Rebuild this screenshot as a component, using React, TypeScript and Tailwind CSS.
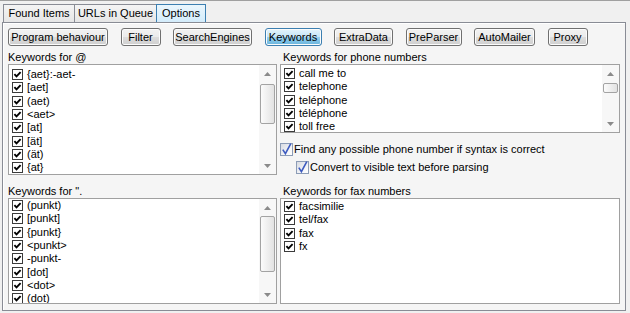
import React from "react";

const ListCheck = () => (
  <span className="flex h-[11px] w-[11px] shrink-0 items-center justify-center border border-[#3b3b3b] bg-white">
    <svg width="9" height="9" viewBox="0 0 9 9">
      <path d="M1.4 4.2 L3.5 6.3 L7.6 2.2" fill="none" stroke="#000" strokeWidth="1.9" />
    </svg>
  </span>
);

const XpCheck = () => (
  <span className="relative h-[13px] w-[13px] shrink-0 border border-[#8c9cb6] bg-[linear-gradient(135deg,#d8dbe2_0%,#f6f7f9_70%,#ffffff_100%)]">
    <svg width="13" height="13" viewBox="0 0 13 13" className="absolute -left-px -top-px overflow-visible">
      <path d="M2.8 6.6 L5.4 10.6 L10.8 0.6" fill="none" stroke="#3d5bc0" strokeWidth="1.6" />
    </svg>
  </span>
);

const Arrow = ({ up }: { up?: boolean }) => (
  <div className="flex h-[17px] items-center justify-center">
    <svg width="7" height="4" viewBox="0 0 7 4">
      <polygon points={up ? "0,4 3.5,0 7,4" : "0,0 3.5,4 7,0"} fill="#8a8a8a" />
    </svg>
  </div>
);

const ScrollBar = ({ thumbTop, thumbH }: { thumbTop: number; thumbH: number }) => (
  <div className="flex w-[17px] shrink-0 flex-col bg-[#f7f7f7]">
    <Arrow up />
    <div className="flex-1 px-[1px]">
      <div
        className="rounded-[2px] border border-[#a3a3a3] bg-linear-to-r from-[#fbfbfb] to-[#e2e2e2]"
        style={{ marginTop: thumbTop, height: thumbH }}
      />
    </div>
    <Arrow />
  </div>
);

const KeywordList = ({
  items,
  pad,
  className,
  scroll,
}: {
  items: string[];
  pad: string;
  className: string;
  scroll?: { top: number; h: number };
}) => (
  <div className={`flex overflow-hidden border border-[#a0a0a0] bg-white ${className}`}>
    <div className={`min-w-0 flex-1 overflow-hidden pl-[3px] ${pad}`}>
      {items.map((it, i) => (
        <div key={i} className="flex h-[13.33px] items-center gap-[4px] whitespace-nowrap">
          <ListCheck />
          <span className="leading-[13px]">{it}</span>
        </div>
      ))}
    </div>
    {scroll && <ScrollBar thumbTop={scroll.top} thumbH={scroll.h} />}
  </div>
);

const tabs = [
  { label: "Found Items", w: "w-[72px]" },
  { label: "URLs in Queue", w: "w-[83px]" },
  { label: "Options", w: "w-[50px]", active: true },
];

const buttons = [
  { label: "Program behaviour", w: "w-[100px]" },
  { label: "Filter", w: "w-[40px]" },
  { label: "SearchEngines", w: "w-[79px]" },
  { label: "Keywords", w: "w-[57px]", active: true },
  { label: "ExtraData", w: "w-[59px]" },
  { label: "PreParser", w: "w-[56px]" },
  { label: "AutoMailer", w: "w-[61px]" },
  { label: "Proxy", w: "w-[40px]" },
];

export default function App() {
  return (
    <div className="h-[313px] w-[630px] overflow-hidden border-t border-[#a0a0a0] bg-[#f0f0f0] font-['Liberation_Sans',Arial,sans-serif] text-[11px] text-black">
      {/* tab strip */}
      <div className="flex pl-[3px] pt-[3px]">
        {tabs.map((t) => (
          <div
            key={t.label}
            className={`-ml-px flex h-[18px] items-center justify-center border border-b-0 first:ml-0 ${t.w} ${
              t.active
                ? "border-[#3c7fb1] bg-linear-to-b from-[#eaf6fd] to-[#d3ecfb]"
                : "border-[#898c95] bg-linear-to-b from-[#f4f4f4] to-[#e6e6e6]"
            }`}
          >
            {t.label}
          </div>
        ))}
      </div>

      {/* tab panel */}
      <div className="ml-[2px] flex h-[289px] w-[624px] flex-col border border-[#898c95] bg-[#f5f5f5] px-[5px] pb-[6px] pt-[5px] shadow-[inset_1px_1px_0_#ffffff]">
        <div className="flex h-[18px] gap-[12.5px]">
          {buttons.map((b) => (
            <div
              key={b.label}
              className={`flex h-[18px] items-center justify-center rounded-[3px] border shadow-[inset_0_0_0_1px_#fcfcfc] ${b.w} ${
                b.active
                  ? "border-[#3c7fb1] bg-[linear-gradient(to_bottom,#e5f4fc_0%,#c4e5f6_50%,#98d1ef_50%,#68b3db_100%)]"
                  : "border-[#707070] bg-[linear-gradient(to_bottom,#f2f2f2_0%,#ebebeb_50%,#dddddd_50%,#cfcfcf_100%)]"
              }`}
            >
              {b.label}
            </div>
          ))}
        </div>

        {/* upper section */}
        <div className="mt-[5px] flex gap-[3px]">
          <div className="flex w-[269px] flex-col">
            <div className="h-[13px] leading-[13px]">Keywords for @</div>
            <KeywordList
              className="h-[111px]"
              pad="pt-[3px]"
              items={["{aet}:-aet-", "[aet]", "(aet)", "<aet>", "[at]", "[ät]", "(ät)", "{at}"]}
              scroll={{ top: 2, h: 40 }}
            />
          </div>
          <div className="flex w-[340px] flex-col">
            <div className="h-[13px] pl-[3px] leading-[13px]">Keywords for phone numbers</div>
            <KeywordList
              className="h-[69px]"
              pad="pt-[2px]"
              items={["call me to", "telephone", "teléphone", "téléphone", "toll free", "toll-free"]}
              scroll={{ top: 1, h: 10 }}
            />
            <div className="mt-[10px] flex h-[13px] items-center gap-[1px] leading-[13px]">
              <XpCheck />
              <span>Find any possible phone number if syntax is correct</span>
            </div>
            <div className="ml-[16px] mt-[5px] flex h-[13px] items-center gap-[1px] leading-[13px]">
              <XpCheck />
              <span>Convert to visible text before parsing</span>
            </div>
          </div>
        </div>

        {/* lower section */}
        <div className="mt-[10px] flex gap-[3px]">
          <div className="flex w-[269px] flex-col">
            <div className="h-[13px] leading-[13px]">Keywords for ".</div>
            <KeywordList
              className="h-[106px]"
              pad="pt-0"
              items={["(punkt)", "[punkt]", "{punkt}", "<punkt>", "-punkt-", "[dot]", "<dot>", "(dot)", "{dot}"]}
              scroll={{ top: 0, h: 56 }}
            />
          </div>
          <div className="flex w-[340px] flex-col">
            <div className="h-[13px] pl-[3px] leading-[13px]">Keywords for fax numbers</div>
            <KeywordList
              className="h-[106px]"
              pad="pt-[1px]"
              items={["facsimilie", "tel/fax", "fax", "fx"]}
            />
          </div>
        </div>
      </div>
    </div>
  );
}
